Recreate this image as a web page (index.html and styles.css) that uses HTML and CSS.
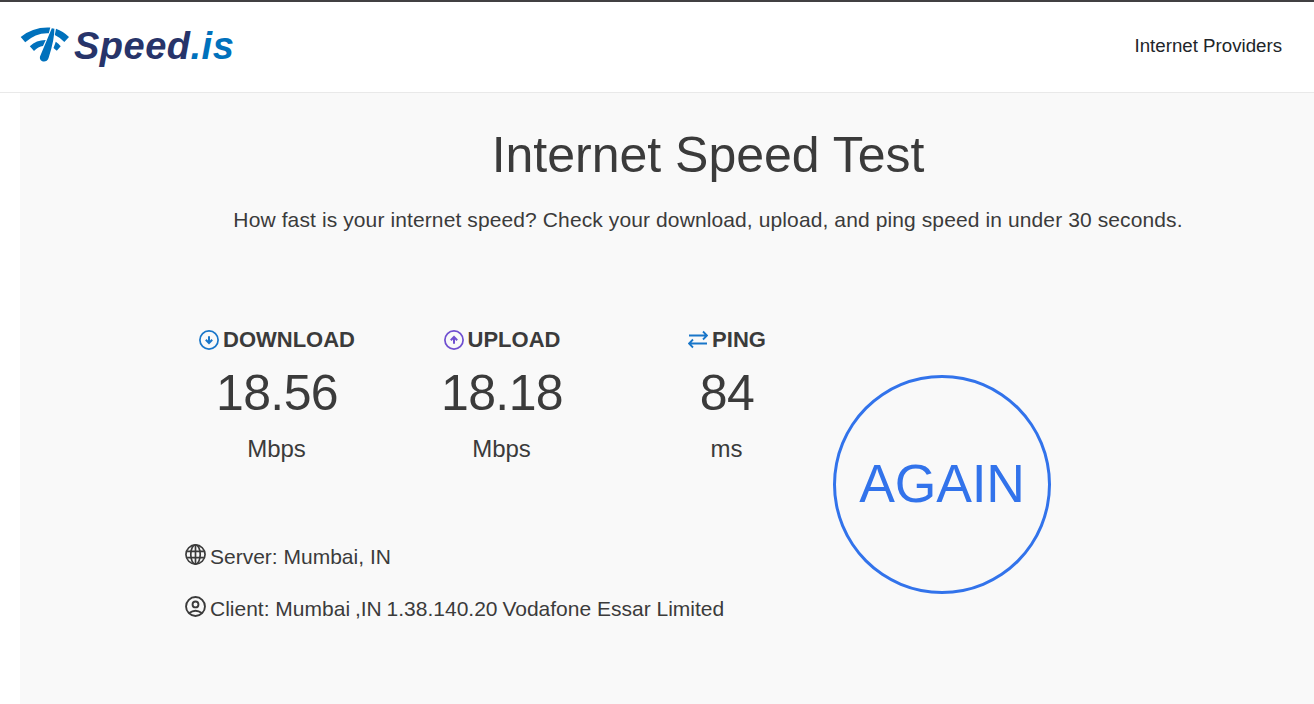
FILE: index.html
```html
<!DOCTYPE html>
<html lang="en">
<head>
<meta charset="utf-8">
<title>Internet Speed Test</title>
<link rel="stylesheet" href="styles.css">
</head>
<body>
<header class="site-header">
  <a class="logo">
    <svg class="logo-mark" viewBox="0 0 50 38" width="50" height="38">
      <g fill="#0071bc">
        <path d="M.7 11Q13 .6 30.3 1.5L28.8 7.2Q16 6.5 5.2 16.3Z"/>
        <path d="M9.8 20.3Q16.5 13.8 25.7 13.9L23 20Q18.3 20.5 14 25Z"/>
        <path d="M36 2.7Q43 5 49 11L44.3 16Q40 11.3 34.8 8.9Z"/>
        <path d="M35.8 15.8Q38.5 17.5 40.7 20.3L36.8 24.7L33.5 22Z"/>
        <path d="M31.8 2.3L34.4 2.7Q34.6 13 28.6 32C27 37.6 18.8 36.3 20 30.5Z"/>
      </g>
    </svg>
    <span class="logo-text">Speed<span class="logo-tld">.is</span></span>
  </a>
  <nav class="nav">Internet Providers</nav>
</header>
<main class="main">
  <div class="intro">
    <h1 class="title">Internet Speed Test</h1>
    <p class="subtitle">How fast is your internet speed? Check your download, upload, and ping speed in under 30 seconds.</p>
  </div>
  <div class="panel">
    <div class="details">
      <div class="metrics">
        <section class="metric">
          <h2 class="label"><svg class="icon" viewBox="0 0 20 20" fill="none" stroke="#1976c9" stroke-width="1.7"><circle cx="10" cy="10" r="9.1"/><path stroke-width="2" d="M10 6.3V12.5M6.8 9.8L10 13L13.2 9.8"/></svg>DOWNLOAD</h2>
          <div class="value">18.56</div>
          <div class="unit">Mbps</div>
        </section>
        <section class="metric">
          <h2 class="label"><svg class="icon" viewBox="0 0 20 20" fill="none" stroke="#6f4fd0" stroke-width="1.7"><circle cx="10" cy="10" r="9.1"/><path stroke-width="2" d="M10 13.7V7.5M6.8 10.2L10 7L13.2 10.2"/></svg>UPLOAD</h2>
          <div class="value">18.18</div>
          <div class="unit">Mbps</div>
        </section>
        <section class="metric">
          <h2 class="label"><svg class="icon" viewBox="0 0 20 20" fill="none" stroke="#1976c9" stroke-width="1.8"><path d="M1 5.5H19M15 1.5L19 5.5L15 9.5M19 13.5H1M5 9.5L1 13.5L5 17.5"/></svg>PING</h2>
          <div class="value">84</div>
          <div class="unit">ms</div>
        </section>
      </div>
      <p class="info"><svg class="info-icon" viewBox="0 0 20 20" fill="none" stroke="#3b3b3b" stroke-width="1.6"><circle cx="10" cy="10" r="9.1"/><ellipse cx="10" cy="10" rx="4.5" ry="9.1"/><path d="M10 1V19M2 7H18M2 13H18"/></svg>Server: Mumbai, IN</p>
      <p class="info"><svg class="info-icon" viewBox="0 0 20 20" fill="none" stroke="#3b3b3b" stroke-width="1.8"><circle cx="10" cy="10" r="9"/><circle cx="10" cy="8" r="2.8"/><path d="M4 16.2Q10 11.8 16 16.2"/></svg>Client: Mumbai<span class="tight">&nbsp;</span>,IN<span class="tight">&nbsp;</span>1.38.140.20<span class="tight">&nbsp;</span>Vodafone Essar Limited</p>
    </div>
    <button class="again">AGAIN</button>
  </div>
</main>
</body>
</html>
```
FILE: styles.css
```css
* { box-sizing: border-box; }
body {
  margin: 0;
  height: 704px;
  overflow: hidden;
  font-family: "Liberation Sans", Arial, sans-serif;
  color: #3b3b3b;
  background: #fff;
}
h1, h2, p { margin: 0; }
.site-header {
  display: flex;
  justify-content: space-between;
  height: 93px;
  padding: 0 32px 0 20px;
  border-top: 2px solid #414042;
  border-bottom: 1px solid #e9e9e9;
}
.logo { display: flex; padding-top: 24px; }
.logo-mark { flex: none; }
.logo-text {
  margin-left: 4px;
  font-size: 38px;
  line-height: 40px;
  font-weight: 700;
  font-style: italic;
  letter-spacing: .5px;
  color: #27346a;
}
.logo-tld { color: #0071bc; }
.nav { padding-top: 29px; font-size: 18.7px; line-height: 30px; color: #212529; }
.main {
  height: 611px;
  margin-left: 20px;
  padding-top: 32px;
  background: #f9f9f9;
}
.intro { padding-left: 82px; text-align: center; }
.title {
  font-size: 50px;
  line-height: 60px;
  font-weight: 400;
}
.subtitle {
  margin-top: 20px;
  font-size: 21px;
  line-height: 30px;
  letter-spacing: .11px;
  white-space: nowrap;
}
.panel { display: flex; padding: 89px 0 0 145px; }
.details { width: 668px; }
.metrics { display: flex; }
.metric { width: 225px; flex: none; text-align: center; }
.label {
  display: flex;
  justify-content: center;
  align-items: center;
  gap: 4px;
  padding-top: 1px;
  font-size: 22px;
  line-height: 30px;
  font-weight: 700;
}
.icon { width: 20px; height: 20px; margin-left: -1px; flex: none; }
.value { margin: 8px 1px 0 0; font-size: 50px; line-height: 60px; letter-spacing: -.6px; }
.unit { margin: 11px 2px 0 0; font-size: 24px; line-height: 30px; }
.info {
  display: flex;
  margin-top: 22px;
  padding-left: 20px;
  font-size: 21px;
  line-height: 30px;
  white-space: nowrap;
}
.metrics + .info { margin-top: 78px; }
.info-icon { width: 21px; height: 21px; margin: 2px 4px 0 0; flex: none; }
.tight { letter-spacing: -1px; }
.again {
  width: 218px;
  height: 219px;
  margin-top: 51px;
  padding: 0 0 3px;
  border: 3px solid #3273eb;
  border-radius: 50%;
  background: none;
  color: #3273eb;
  font: 53.5px "Liberation Sans", Arial, sans-serif;
  letter-spacing: -.2px;
}
```
